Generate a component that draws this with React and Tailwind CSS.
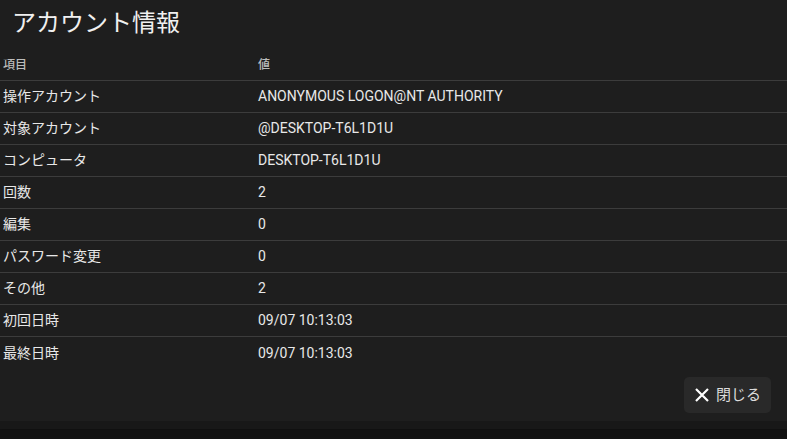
const rows = [
  ['操作アカウント', 'ANONYMOUS LOGON@NT AUTHORITY'],
  ['対象アカウント', '@DESKTOP-T6L1D1U'],
  ['コンピュータ', 'DESKTOP-T6L1D1U'],
  ['回数', '2'],
  ['編集', '0'],
  ['パスワード変更', '0'],
  ['その他', '2'],
  ['初回日時', '09/07 10:13:03'],
  ['最終日時', '09/07 10:13:03'],
]

export default function App() {
  return (
    <div
      className="h-[439px] w-[787px] overflow-hidden bg-[#121212]"
      style={{ fontFamily: 'Roboto, "Noto Sans CJK JP", sans-serif' }}
    >
      <div className="flex h-[421px] flex-col bg-[#1e1e1e] shadow-[0_4px_8px_rgba(0,0,0,0.6)]">
        <div className="flex h-[49px] items-center pl-[12px] pb-[3px] text-[24px] leading-none text-[#f0f0f0]">
          アカウント情報
        </div>
        <div className="flex h-[32px] items-center border-b border-[#3c3c3c] text-[12px] font-medium text-[#bdbdbd]">
          <div className="w-[258px] pl-[3px]">項目</div>
          <div>値</div>
        </div>
        {rows.map(([k, v], i) => (
          <div
            key={k}
            className={
              'flex h-[32px] items-center text-[14px] text-[#e8e8e8] ' +
              (i < rows.length - 1 ? 'border-b border-[#3c3c3c]' : '')
            }
          >
            <div className="w-[258px] pl-[3px]">{k}</div>
            <div>{v}</div>
          </div>
        ))}
        <div className="flex justify-end pt-[8px] pr-[16px]">
          <button className="flex h-[36px] w-[87px] items-center justify-center gap-[6px] rounded-[5px] bg-[#292929] text-[15px] text-[#dcdcdc]">
            <svg width="16" height="16" viewBox="0 0 16 16" className="text-white">
              <path d="M2 2L14 14M14 2L2 14" stroke="currentColor" strokeWidth="2.2" />
            </svg>
            <span>閉じる</span>
          </button>
        </div>
      </div>
      <div className="h-[8px] bg-[#181818]" />
    </div>
  )
}
